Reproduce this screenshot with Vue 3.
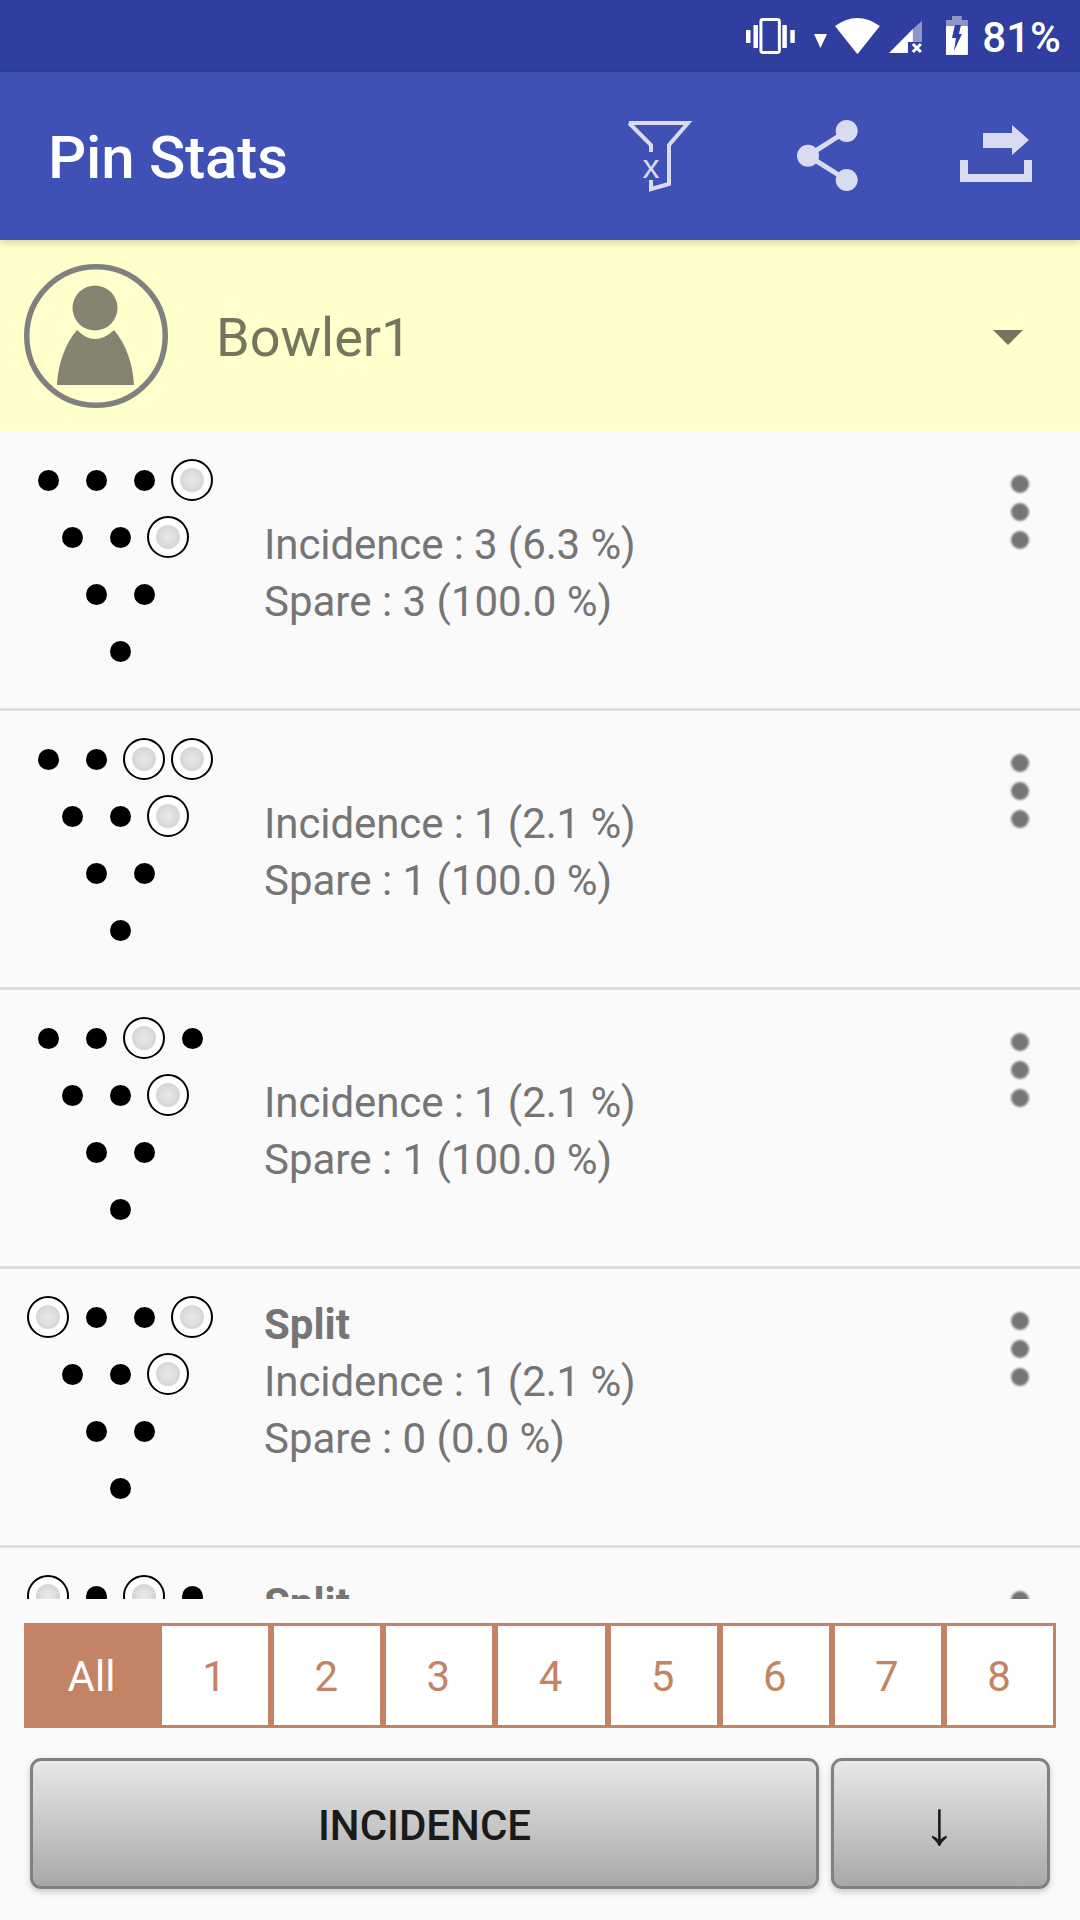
<script setup>
const rows = [
  { rack: [[0, 0, 0, 1], [0, 0, 1], [0, 0], [0]], label: '', incidence: '3 (6.3 %)', spare: '3 (100.0 %)' },
  { rack: [[0, 0, 1, 1], [0, 0, 1], [0, 0], [0]], label: '', incidence: '1 (2.1 %)', spare: '1 (100.0 %)' },
  { rack: [[0, 0, 1, 0], [0, 0, 1], [0, 0], [0]], label: '', incidence: '1 (2.1 %)', spare: '1 (100.0 %)' },
  { rack: [[1, 0, 0, 1], [0, 0, 1], [0, 0], [0]], label: 'Split', incidence: '1 (2.1 %)', spare: '0 (0.0 %)' },
  { rack: [[1, 0, 1, 0], [0, 0, 1], [0, 0], [0]], label: 'Split', incidence: '1 (2.1 %)', spare: '0 (0.0 %)' }
];

const games = ['1', '2', '3', '4', '5', '6', '7', '8'];
</script>

<template>
  <div class="app">
    <div class="status-bar">
      <svg class="ic-vibrate" width="49" height="36" viewBox="0 0 49 36">
        <rect x="0" y="12" width="4.5" height="13" fill="#fff" />
        <rect x="7.5" y="7" width="4.5" height="23" fill="#fff" />
        <rect x="15" y="1.5" width="18.5" height="33" rx="2" fill="none" stroke="#fff" stroke-width="3" />
        <rect x="36.5" y="7" width="4.5" height="23" fill="#fff" />
        <rect x="44.5" y="12" width="4.5" height="13" fill="#fff" />
      </svg>
      <svg class="ic-tri" width="13" height="14" viewBox="0 0 13 14">
        <path d="M0 0H13L6.5 14Z" fill="#fff" />
      </svg>
      <svg class="ic-wifi" width="45" height="36" viewBox="0 0 45 36">
        <path d="M0 8Q22.500 -8 45 8L23.500 35Q22.500 36.500 21.500 35Z" fill="#fff" />
      </svg>
      <svg class="ic-signal" width="34" height="34" viewBox="0 0 34 34">
        <path d="M0 33L24 9V22H19V33Z" fill="#fff" />
        <path d="M24 9L34 0V22H24Z" fill="#fff" opacity="0.45" />
        <path d="M24 24L32 32M32 24L24 32" stroke="#fff" stroke-width="3" />
      </svg>
      <svg class="ic-battery" width="22" height="39" viewBox="0 0 22 39">
        <path d="M6 0H16V4H22V10H0V4H6Z" fill="#fff" opacity="0.45" />
        <path d="M0 10H22V39H0Z" fill="#fff" />
        <path d="M9 9H15L13 18H16L8 35L10 22H6Z" fill="#303f9f" />
      </svg>
      <span class="battery-text">81%</span>
    </div>

    <div class="toolbar">
      <span class="title">Pin Stats</span>
      <svg class="tb-filter" width="120" height="110" viewBox="0 0 120 110">
        <path d="M29 22H88L69 44V83L51 88V79M51 51V44L29 22" fill="none" stroke="#d9dcf0" stroke-width="4" />
        <text x="51" y="77" text-anchor="middle" class="filter-x">x</text>
      </svg>
      <svg class="tb-share" width="90" height="90" viewBox="0 0 90 90">
        <path d="M66.700 20L28 44.700L66.700 69" fill="none" stroke="#d9dcf0" stroke-width="5" />
        <circle cx="66.700" cy="20" r="11" fill="#d9dcf0" />
        <circle cx="28" cy="44.700" r="11" fill="#d9dcf0" />
        <circle cx="66.700" cy="69" r="11" fill="#d9dcf0" />
      </svg>
      <svg class="tb-export" width="90" height="90" viewBox="0 0 90 90">
        <path d="M33 22H62V14L79 29L62 44V37H33Z" fill="#d9dcf0" />
        <path d="M10 49H18V63H74V49H82V71H10Z" fill="#d9dcf0" />
      </svg>
    </div>

    <div class="bowler">
      <svg class="avatar" width="144" height="144" viewBox="0 0 144 144">
        <circle cx="72" cy="72" r="69.250" fill="none" stroke="#808080" stroke-width="5.500" />
        <circle cx="71" cy="44" r="22.500" fill="#848470" />
        <path d="M53 66Q71 84 90 66C102 80 109 100 110 121H33C34 100 41 80 53 66Z" fill="#848470" />
      </svg>
      <span class="bowler-name">Bowler1</span>
      <span class="caret"></span>
    </div>

    <div class="list">
      <div v-for="(row, i) in rows" :key="i" class="row">
        <div class="rack">
          <div v-for="(line, j) in row.rack" :key="j" class="rack-line">
            <div v-for="(pin, k) in line" :key="k" class="pin-cell">
              <span v-if="pin" class="pin-up"><span class="pin-core"></span></span>
              <span v-else class="pin-down"></span>
            </div>
          </div>
        </div>
        <div class="info">
          <div class="label">{{ row.label }}</div>
          <div class="incidence">Incidence : {{ row.incidence }}</div>
          <div>Spare : {{ row.spare }}</div>
        </div>
        <div class="more">
          <span></span>
          <span></span>
          <span></span>
        </div>
      </div>
    </div>

    <div class="games">
      <div class="game active">All</div>
      <div v-for="g in games" :key="g" class="game">{{ g }}</div>
    </div>

    <div class="actions">
      <div class="btn btn-sort">INCIDENCE</div>
      <div class="btn btn-dir">↓</div>
    </div>
  </div>
</template>

<style scoped>
.app {
  width: 1080px;
  height: 1920px;
  display: flex;
  flex-direction: column;
  background: #fafafa;
  font-family: Roboto, "Liberation Sans", sans-serif;
  overflow: hidden;
}

.status-bar {
  height: 72px;
  flex: none;
  background: #303f9f;
  display: flex;
  align-items: center;
  padding: 0 19px 0 746px;
  box-sizing: border-box;
  color: #fff;
}
.ic-tri { margin-left: 19px; margin-top: 10px; }
.ic-wifi { margin-left: 8px; margin-top: -1px; }
.ic-signal { margin-left: 9px; margin-top: 2px; }
.ic-battery { margin-left: 24px; margin-top: -1px; }
.battery-text {
  margin-left: 14px;
  padding-top: 2px;
  font-size: 42px;
  font-weight: 500;
}

.toolbar {
  height: 168px;
  flex: none;
  background: #3f51b5;
  display: flex;
  align-items: center;
  position: relative;
  z-index: 2;
  box-shadow: 0 2px 8px rgba(0, 0, 0, 0.2);
}
.title {
  margin-left: 48px;
  width: 552px;
  padding-top: 3px;
  color: #fff;
  font-size: 60px;
  font-weight: 500;
  letter-spacing: -0.2px;
}
.filter-x {
  font-family: "Liberation Sans", sans-serif;
  font-size: 34px;
  fill: #d9dcf0;
}
.tb-filter { margin-top: -1px; }
.tb-share { margin-left: 60px; }
.tb-export { margin-left: 80px; }

.bowler {
  height: 192px;
  flex: none;
  background: #ffffcc;
  display: flex;
  align-items: center;
  padding-left: 24px;
}
.bowler-name {
  margin-left: 48px;
  padding-top: 3px;
  font-size: 54px;
  color: #75755f;
}
.caret {
  margin-left: auto;
  margin-right: 57px;
  margin-top: 2px;
  border-left: 15px solid transparent;
  border-right: 15px solid transparent;
  border-top: 15px solid #75755f;
}

.list {
  flex: 1;
  min-height: 0;
  overflow: hidden;
}
.row {
  height: 279px;
  box-sizing: border-box;
  display: flex;
  position: relative;
  border-bottom: 3px solid #dddddd;
}
.rack {
  width: 192px;
  margin-left: 24px;
  padding-top: 19.5px;
}
.rack-line {
  height: 57px;
  display: flex;
  justify-content: center;
}
.pin-cell {
  width: 48px;
  height: 57px;
  display: flex;
  align-items: center;
  justify-content: center;
}
.pin-down {
  width: 21px;
  height: 21px;
  border-radius: 50%;
  background: #000;
}
.pin-up {
  width: 42px;
  height: 42px;
  box-sizing: border-box;
  border: 2px solid #000;
  border-radius: 50%;
  background: #fff;
  display: flex;
  align-items: center;
  justify-content: center;
}
.pin-core {
  width: 24px;
  height: 24px;
  border-radius: 50%;
  background: radial-gradient(circle, #ebebeb 0%, #cccccc 100%);
}
.info {
  margin-left: 48px;
  padding-top: 27px;
  font-size: 42px;
  line-height: 57px;
  color: #757575;
}
.label {
  height: 57px;
  font-weight: 700;
}
.incidence {
  letter-spacing: -0.1px;
}
.more {
  position: absolute;
  top: 43px;
  left: 1011px;
  display: flex;
  flex-direction: column;
  gap: 10px;
}
.more span {
  width: 18px;
  height: 18px;
  border-radius: 50%;
  background: #757575;
  filter: blur(1px);
}

.games {
  flex: none;
  margin: 24px 24px 0;
  height: 105px;
  display: grid;
  grid-template-columns: 135px repeat(8, 1fr);
}
.game {
  box-sizing: border-box;
  border: 3px solid #c58365;
  padding: 2px 2px 0 0;
  background: #fff;
  color: #c58365;
  font-size: 42px;
  display: flex;
  align-items: center;
  justify-content: center;
}
.game.active {
  padding-right: 0;
  background: #c58365;
  color: #fff;
}

.actions {
  flex: none;
  display: flex;
  gap: 12px;
  margin: 30px 30px 31px 30px;
}
.btn {
  height: 131px;
  box-sizing: border-box;
  border: 3px solid #808080;
  border-radius: 11px;
  padding-top: 3px;
  background: linear-gradient(#e8e8e8, #a8a8a8);
  box-shadow: 0 3px 6px rgba(0, 0, 0, 0.2);
  color: #1a1a1a;
  font-size: 42px;
  font-weight: 500;
  display: flex;
  align-items: center;
  justify-content: center;
}
.btn-sort { width: 789px; }
.btn-dir { flex: 1; padding: 0 2px 2px 0; font-size: 62px; font-weight: 400; }
</style>

<style>
html, body {
  margin: 0;
  background: #fafafa;
}
</style>
